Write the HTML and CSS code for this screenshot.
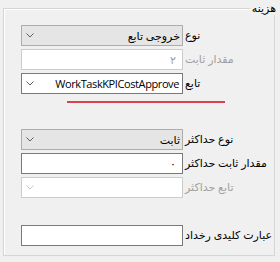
FILE: index.html
```html
<!DOCTYPE html>
<html lang="fa" dir="rtl">
<head>
    <meta charset="UTF-8">
    <title>هزینه</title>
    <link rel="stylesheet" href="styles.css">
</head>
<body>
    <fieldset class="group">
        <legend class="group-title">هزینه</legend>

        <div class="rows">
            <div class="row">
                <div class="combo">
                    <span class="value">خروجی تابع</span>
                    <svg class="arrow" width="8" height="5" viewBox="0 0 8 5"><path d="M0.5 0.5 L4 4 L7.5 0.5" fill="none" stroke="currentColor"/></svg>
                </div>
                <span class="label">نوع</span>
            </div>
            <div class="row">
                <div class="textbox disabled"><span class="value">۲</span></div>
                <span class="label disabled">مقدار ثابت</span>
            </div>
            <div class="row">
                <div class="combo editable">
                    <span class="value latin">WorkTaskKPICostApprove</span>
                    <svg class="arrow" width="8" height="5" viewBox="0 0 8 5"><path d="M0.5 0.5 L4 4 L7.5 0.5" fill="none" stroke="currentColor"/></svg>
                </div>
                <span class="label">تابع</span>
            </div>
        </div>

        <div class="underline"></div>

        <div class="rows">
            <div class="row">
                <div class="combo">
                    <span class="value">ثابت</span>
                    <svg class="arrow" width="8" height="5" viewBox="0 0 8 5"><path d="M0.5 0.5 L4 4 L7.5 0.5" fill="none" stroke="currentColor"/></svg>
                </div>
                <span class="label">نوع حداکثر</span>
            </div>
            <div class="row">
                <div class="textbox"><span class="value">۰</span></div>
                <span class="label">مقدار ثابت حداکثر</span>
            </div>
            <div class="row">
                <div class="combo editable disabled">
                    <span class="value"></span>
                    <svg class="arrow" width="8" height="5" viewBox="0 0 8 5"><path d="M0.5 0.5 L4 4 L7.5 0.5" fill="none" stroke="currentColor"/></svg>
                </div>
                <span class="label disabled">تابع حداکثر</span>
            </div>
        </div>

        <div class="rows keyword">
            <div class="row">
                <div class="textbox"><span class="value"></span></div>
                <span class="label">عبارت کلیدی رخداد</span>
            </div>
        </div>
    </fieldset>
</body>
</html>
```

FILE: styles.css
```css
body {
    margin: 0;
    background-color: #f0f0f0;
    font-family: "Open Sans", "DejaVu Sans", sans-serif;
    font-size: 11px;
    color: #000;
}
.group {
    box-sizing: border-box;
    height: 255px;
    margin: 1px 5px 0 3px;
    padding: 10px 0 0 17px;
    border: 1px solid #d5d5d5;
    box-shadow: inset 1px 1px 0 #fff;
}
.group-title {
    padding: 0 2px;
    margin-right: -4px;
    line-height: 14px;
}
.rows {
    display: flex;
    flex-direction: column;
    gap: 3px;
}
.row {
    direction: ltr;
    display: flex;
    align-items: center;
    gap: 2px;
    height: 21px;
}
.combo,
.textbox {
    direction: rtl;
    box-sizing: border-box;
    width: 162px;
    height: 21px;
    display: flex;
    align-items: center;
    justify-content: space-between;
    padding: 0 2px 0 4px;
    background-color: #fff;
    border: 1px solid #7a7a7a;
    white-space: nowrap;
    overflow: hidden;
}
.combo {
    background-color: #e5e5e5;
    border-color: #adadad;
}
.combo.editable {
    background-color: #fff;
    border-color: #7a7a7a;
}
.combo.disabled,
.textbox.disabled {
    background-color: #fff;
    border-color: #cccccc;
    color: #a0a0a0;
}
.textbox {
    padding-right: 6px;
}
.arrow {
    color: #606060;
    flex: none;
}
.disabled .arrow {
    color: #c8c8c8;
}
.latin {
    letter-spacing: -0.4px;
    margin-right: 1px;
}
.label {
    direction: rtl;
    white-space: nowrap;
    margin-top: -2px;
}
.label.disabled {
    color: #a0a0a0;
}
.underline {
    width: 158px;
    height: 2px;
    margin: 7px 49px 26px 0;
    background-color: #d9434f;
}
.keyword {
    margin-top: 27px;
}
```
